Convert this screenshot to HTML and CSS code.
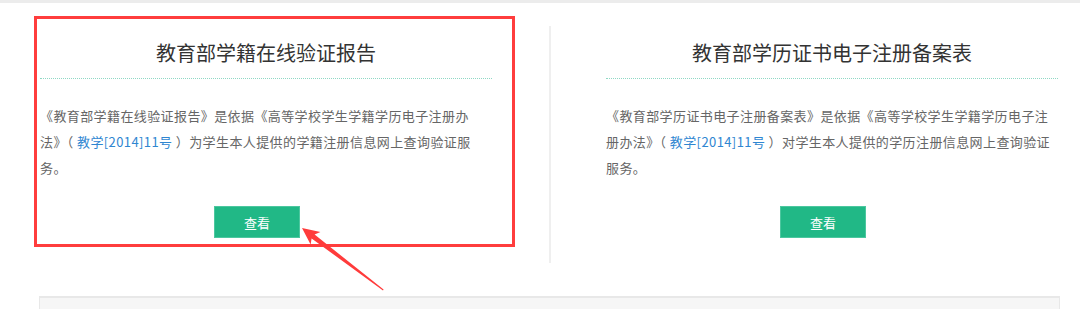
FILE: index.html
```html
<!DOCTYPE html>
<html lang="zh-CN">
<head>
  <meta charset="UTF-8">
  <title>学信档案 - 在线验证报告</title>
  <link rel="stylesheet" href="styles.css">
</head>
<body>
  <div class="page">
    <div class="topbar"></div>

    <div class="cols">
      <div class="col">
        <h2 class="col-title">教育部学籍在线验证报告</h2>
        <p class="col-desc">《教育部学籍在线验证报告》是依据《高等学校学生学籍学历电子注册办法》（ <a href="#">教学[2014]11号</a> ）为学生本人提供的学籍注册信息网上查询验证服务。</p>
        <div class="col-action"><a class="btn" href="#">查看</a></div>
      </div>
      <div class="col col-right">
        <h2 class="col-title">教育部学历证书电子注册备案表</h2>
        <p class="col-desc">《教育部学历证书电子注册备案表》是依据《高等学校学生学籍学历电子注册办法》（ <a href="#">教学[2014]11号</a> ）对学生本人提供的学历注册信息网上查询验证服务。</p>
        <div class="col-action"><a class="btn" href="#">查看</a></div>
      </div>
    </div>

    <div class="panel"></div>

    <!-- annotation -->
    <div class="mark-box"></div>
    <svg class="mark-arrow" width="1080" height="309" viewBox="0 0 1080 309">
      <polygon fill="#ff3b3b" points="302,228 320.4,231.9 314.6,234.5 383.6,289.6 383,290.4 311.6,238.5 310.6,244.6"/>
    </svg>
  </div>
</body>
</html>
```

FILE: styles.css
```css
* { margin: 0; padding: 0; box-sizing: border-box; }
body { font-family: "Noto Sans CJK SC", "Liberation Sans", sans-serif; background: #fff; color: #666; }
a { text-decoration: none; }

.page { position: relative; width: 1080px; height: 309px; overflow: hidden; }
.topbar { height: 3px; background: #ececec; }

.cols { display: grid; grid-template-columns: 509px 511px; margin: 23px 0 0 40px; }
.col { padding: 0 57px 25px 0; }
.col-right { border-left: 2px solid #efefef; padding: 0 2px 25px 55px; }

.col-title {
  font-size: 20px; font-weight: normal; color: #333; text-align: center;
  line-height: 34px; margin-top: 10px; padding-bottom: 8px;
  border-bottom: 1px dotted #8fd8c4;
}
.col-desc { font-size: 13px; line-height: 26px; letter-spacing: 0.4px; margin-top: 24px; padding-right: 4px; }
.col-desc a { color: #2f86d1; }

.col-action { text-align: center; margin-top: 25px; padding-right: 18px; }
.btn {
  display: inline-block; width: 86px; height: 32px; line-height: 32px;
  background: #21b886; color: #fff; font-size: 13px;
  border: 1px solid #4cc79f;
}

.panel {
  margin: 33px 20px 0 39px; height: 40px;
  background: #f6f6f6; border: 1px solid #e8e8e8; border-top-width: 2px;
}

.mark-box {
  position: absolute; left: 34px; top: 16px; width: 481px; height: 231px;
  border: 3px solid #ff3d3d;
}
.mark-arrow { position: absolute; left: 0; top: 0; pointer-events: none; }
```
